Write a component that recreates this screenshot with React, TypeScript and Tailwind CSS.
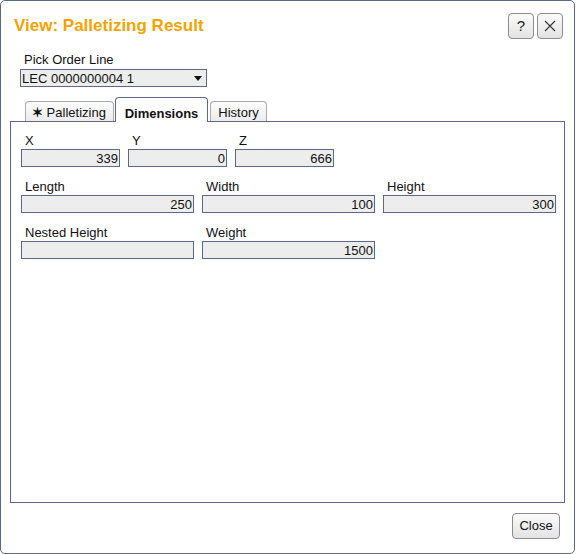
import React from 'react';

// campos de la pestaña Dimensions
const filaXYZ = [
  { label: 'X', valor: '339' },
  { label: 'Y', valor: '0' },
  { label: 'Z', valor: '666' },
];

const filaMedidas = [
  { label: 'Length', valor: '250' },
  { label: 'Width', valor: '100' },
  { label: 'Height', valor: '300' },
];

const filaPeso = [
  { label: 'Nested Height', valor: '' },
  { label: 'Weight', valor: '1500' },
];

function Campo({ label, valor }: { label: string; valor: string }) {
  return (
    <div className="flex flex-col">
      <span className="pl-[4px] pt-[1px] text-[13px] leading-[15px] text-[#111]">{label}</span>
      <div className="mt-[1px] h-[18px] border border-[#5b6886] bg-[#ededed] pr-[1px] text-right text-[13px] leading-[17px] text-[#111]">
        {valor}
      </div>
    </div>
  );
}

function BotonIcono({ children }: { children: React.ReactNode }) {
  return (
    <button className="flex h-[26px] w-[26px] items-center justify-center rounded-[4px] border border-[#8c8c8c] bg-gradient-to-b from-[#fbfbfb] to-[#e3e3e3] text-[15px] text-[#222]">
      {children}
    </button>
  );
}

export default function App() {
  return (
    <div className="h-[554px] w-[577px] bg-white font-['Liberation_Sans',Arial,sans-serif]">
      <div className="flex h-[554px] w-[575px] flex-col rounded-[5px] border border-[#5b6886] bg-white">
        {/* cabecera */}
        <div className="flex items-start justify-between">
          <h1 className="ml-[13px] mt-[15px] text-[17px] font-bold leading-[20px] text-[#f5a300]">
            View: Palletizing Result
          </h1>
          <div className="mr-[11px] mt-[12px] flex gap-[3px]">
            <BotonIcono>?</BotonIcono>
            <BotonIcono>
              <svg width="12" height="12" viewBox="0 0 12 12">
                <path d="M1 1 L11 11 M11 1 L1 11" stroke="#333" strokeWidth="1.1" fill="none" />
              </svg>
            </BotonIcono>
          </div>
        </div>

        {/* selector */}
        <div className="ml-[23px] mt-[13px] text-[13px] leading-[15px] text-[#111]">Pick Order Line</div>
        <div className="ml-[19px] mt-[2px] flex h-[18px] w-[187px] items-center justify-between border border-[#5b6886] bg-[#ededed] pl-[1px] pr-[4px] text-[13px] leading-[16px] text-[#111]">
          <span className="pt-[1px]">LEC 0000000004 1</span>
          <svg width="8" height="5" viewBox="0 0 8 5">
            <path d="M0 0 L8 0 L4 5 Z" fill="#111" />
          </svg>
        </div>

        {/* pestañas */}
        <div className="ml-[24px] mt-[10px] flex h-[24px] items-end">
          <div className="h-[20px] w-[89px] rounded-t-[4px] border border-b-0 border-[#a9a9a9] bg-gradient-to-b from-[#fdfdfd] to-[#ececec] pl-[6px] pt-[4px] text-[13px] leading-[14px] text-[#111]">
            <span className="text-[13px] font-bold">✶</span> Palletizing
          </div>
          <div className="relative z-10 -mb-px ml-[1px] h-[25px] w-[93px] rounded-t-[4px] border border-b-0 border-[#5b6886] bg-white pt-[8px] text-center text-[13px] font-bold leading-[15px] text-[#111]">
            Dimensions
          </div>
          <div className="ml-[2px] h-[20px] w-[57px] rounded-t-[4px] border border-b-0 border-[#a9a9a9] bg-gradient-to-b from-[#fdfdfd] to-[#ececec] pt-[4px] text-center text-[13px] leading-[14px] text-[#111]">
            History
          </div>
        </div>

        {/* panel */}
        <div className="mx-[9px] h-[382px] border border-[#5b6886] pl-[10px] pr-[8px] pt-[10px]">
          <div className="grid w-[313px] grid-cols-3 gap-x-[8px]">
            {filaXYZ.map((c) => (
              <Campo key={c.label} label={c.label} valor={c.valor} />
            ))}
          </div>
          <div className="mt-[11px] grid grid-cols-3 gap-x-[8px]">
            {filaMedidas.map((c) => (
              <Campo key={c.label} label={c.label} valor={c.valor} />
            ))}
          </div>
          <div className="mt-[11px] grid grid-cols-3 gap-x-[8px]">
            {filaPeso.map((c) => (
              <Campo key={c.label} label={c.label} valor={c.valor} />
            ))}
          </div>
        </div>

        {/* pie */}
        <div className="flex justify-end pr-[14px] pt-[10px]">
          <button className="h-[26px] w-[48px] rounded-[4px] border border-[#8c8c8c] bg-gradient-to-b from-[#fbfbfb] to-[#e3e3e3] text-[13px] text-[#111]">
            Close
          </button>
        </div>
      </div>
    </div>
  );
}
